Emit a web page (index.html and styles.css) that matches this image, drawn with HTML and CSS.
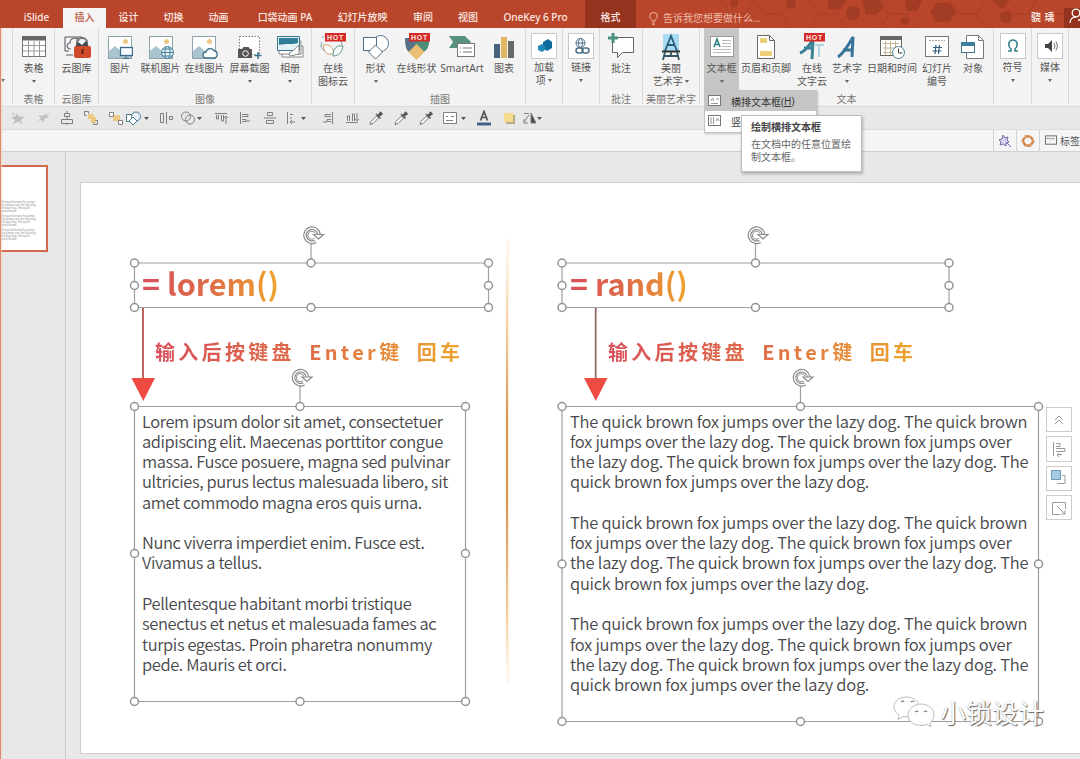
FILE: index.html
```html
<!DOCTYPE html>
<html lang="zh-CN">
<head>
<meta charset="utf-8">
<title>演示文稿</title>
<link rel="stylesheet" href="styles.css">
</head>
<body>
<div class="app">
<header class="tabs">
  <svg class="pattern" width="380" height="28" viewBox="0 0 380 28" fill="none" stroke="#a8402a" stroke-width="1">
    <path d="M20 0l10 14 16 0 8-14M54 0l10 14h18l9 14M82 14l9-14M110 0l9 14-9 14M119 14h18l9-14M137 14l9 14M180 0l9 14h18l9-14M207 14l9 14M189 14l-9 14M250 0l9 14h18l9-14M277 14l9 14M300 0l10 14 18 0 9-14M345 28l9-14h18"/>
    <g fill="#a33c24" stroke="none"><circle cx="34" cy="3" r="4"/><circle cx="153" cy="13" r="7"/><circle cx="91" cy="4" r="5"/><path d="M128 0h18l-6 9h-12zM162 0h16l6 7-8 8h-10zM205 0h17l-5 11h-10zM236 3h14l6 9-6 10h-14l-6-10zM292 0h18l-8 9z"/><circle cx="306" cy="17" r="6"/><circle cx="205" cy="21" r="4"/></g>
  </svg>
  <span class="tab"></span>
  <span class="tab">iSlide</span>
  <span class="tab active">插入</span>
  <span class="tab">设计</span>
  <span class="tab">切换</span>
  <span class="tab">动画</span>
  <span class="tab">口袋动画 PA</span>
  <span class="tab">幻灯片放映</span>
  <span class="tab">审阅</span>
  <span class="tab">视图</span>
  <span class="tab">OneKey 6 Pro</span>
  <span class="tab context">格式</span>
  <span class="tell"><svg width="9" height="13" viewBox="0 0 9 13" fill="none" stroke="#f3b9a6"><path d="M3 9c0-2-2.300-2.500-2.300-5a3.800 3.500 0 0 1 7.600 0c0 2.500-2.300 3-2.300 5zM3 11h3M3.500 12.500h2"/></svg>告诉我您想要做什么...</span>
  <span class="user">骁 瑀</span>
  <span class="share"><svg width="14" height="16" viewBox="0 0 14 16" fill="none" stroke="#fff" stroke-width="1.300"><circle cx="7" cy="5" r="3.800"/><path d="M1 15c0-4 3-6 6-6M9 12h5"/></svg></span>
</header>

<section class="ribbon">
  <div class="group g0"><i class="caret"></i></div>
  <div class="group g1"><div class="items">
    <div class="item"><svg width="26" height="26" viewBox="0 0 26 26"><rect x="1.500" y="2.500" width="23" height="20" fill="#fff" stroke="#777"/><rect x="1" y="2" width="24" height="4.500" fill="#666"/><path d="M2 11.500h22M2 17h22M7.500 7v15M13 7v15M18.500 7v15" stroke="#999" fill="none"/></svg><b>表格</b><i class="caret"></i></div>
  </div><span class="gname">表格</span></div>
  <div class="group g2"><div class="items">
    <div class="item"><svg width="28" height="26" viewBox="0 0 28 26"><path d="M6 17H2V3h17M3 21h7" fill="none" stroke="#555"/><path d="M8 15c-5 0-5-6-1-6 0-6 8-6 9-2" fill="none" stroke="#667" stroke-width="1.200"/><path d="M14 11V8a5 4 0 0 1 10 0v3" fill="none" stroke="#777" stroke-width="2"/><path d="M12 13l3-5 4 3 4-4 3 6z" fill="#3f4b4f"/><rect x="11" y="12" width="17" height="12" rx="2" fill="#cf4a2b"/><path d="M19.500 15v5" stroke="#5a2115" stroke-width="2"/></svg><b>云图库</b></div>
  </div><span class="gname">云图库</span></div>
  <div class="group g3"><div class="items">
    <div class="item"><svg width="26" height="26" viewBox="0 0 26 26"><use href="#pic"/><rect x="13.500" y="13.500" width="12" height="8" fill="#f5fbff" stroke="#3c6e8c" stroke-width="1.300"/><path d="M19 22v2M16 24.500h6" stroke="#3c6e8c"/></svg><b>图片</b></div>
    <div class="item"><svg width="26" height="26" viewBox="0 0 26 26"><use href="#pic"/><g fill="#e8f2f6" stroke="#41809a"><circle cx="19.500" cy="18.500" r="6"/><ellipse cx="19.500" cy="18.500" rx="2.600" ry="6"/><path d="M13.500 18.500h12M15 15h9M15 22h9"/></g></svg><b>联机图片</b></div>
    <div class="item"><svg width="28" height="26" viewBox="0 0 28 26"><use href="#pic"/><path d="M15 24a3 3 0 0 1 0-6 4.500 4.500 0 0 1 8-1.500 4 4 0 0 1 1 7.500z" fill="#fff" stroke="#3f7389" stroke-width="1.300"/></svg><b>在线图片</b></div>
    <div class="item"><svg width="26" height="26" viewBox="0 0 26 26"><rect x="2.500" y="2.500" width="20" height="18" fill="#fff" stroke="#777" stroke-dasharray="1.500 1.500"/><path d="M1 15h4l1.500-2h5l1.500 2h2v9H1z" fill="#555"/><circle cx="8.500" cy="19.500" r="2.800" fill="#555" stroke="#fff"/><path d="M21 18v7M17.500 21.500h7" stroke="#35738a" stroke-width="1.500"/></svg><b>屏幕截图</b><i class="caret"></i></div>
    <div class="item"><svg width="28" height="26" viewBox="0 0 28 26"><path d="M6 12h21v11H6z" fill="#fff" stroke="#888"/><path d="M3 7h22v13H3z" fill="#fff" stroke="#888"/><path d="M1.500 2.500h22v14h-22z" fill="#e4f1f5" stroke="#397791"/><path d="M3 4h19v5c-6 2-12 0-19 2z" fill="#337c99"/><path d="M13 19c4-1 5-4 10-8v9l-9 2z" fill="#fff" stroke="#888"/></svg><b>相册</b><i class="caret"></i></div>
  </div><span class="gname">图像</span></div>
  <div class="group g4"><div class="items">
    <div class="item"><svg width="28" height="28" viewBox="0 0 28 28"><path d="M3 5c1-3 6-3 8 0M3 9c-3 5 1 10 5 8M22 8c3 6-2 9-6 8" fill="none" stroke="#8aa9a9"/><path d="M4 12c6-1 10 2 11 8-6 3-10 0-11-8z" fill="#fff" stroke="#c79f67"/><path d="M24 13c-6-1-10 2-10 10 6 0 9-4 10-10z" fill="#f6fbf9" stroke="#5d9b98"/><use href="#hot" x="6" y="0"/></svg><b>在线<br>图标云</b></div>
  </div></div>
  <div class="group g5"><div class="items">
    <div class="item"><svg width="28" height="26" viewBox="0 0 28 26" fill="#fff" stroke="#54728c"><circle cx="18.500" cy="9.500" r="8"/><rect x="1.500" y="3.500" width="13" height="13"/><path d="M13.500 11l7 7-7 7-7-7z"/></svg><b>形状</b><i class="caret"></i></div>
    <div class="item"><svg width="28" height="28" viewBox="0 0 28 28"><path d="M2 5h10v14H6C3 17 2 12 2 5z" fill="#557288"/><path d="M12 5h14c1 9-3 14-7 14h-7z" fill="#4e8b78"/><path d="M13.500 11l8 8-8 8-8-8z" fill="#e8bf75"/><use href="#hot" x="6" y="0"/></svg><b>在线形状</b></div>
    <div class="item"><svg width="28" height="26" viewBox="0 0 28 26"><path d="M1 2h16l6 6-4 6H1l4-6z" fill="#56927d"/><rect x="9.500" y="9.500" width="17" height="13" fill="#fff" stroke="#777"/><path d="M12 14h1M12 18h1M15 14h9M15 18h9" stroke="#777"/></svg><b class="latin">SmartArt</b></div>
    <div class="item"><svg width="24" height="26" viewBox="0 0 24 26"><path d="M2 10h6v14H2z" fill="#46627c"/><path d="M9 3h6v21H9z" fill="#dfb765"/><path d="M16 7h6v17h-6z" fill="#686868"/></svg><b>图表</b></div>
  </div><span class="gname">插图</span></div>
  <div class="group g6"><div class="items">
    <div class="item boxed"><svg width="26" height="26" viewBox="0 0 26 26"><rect x=".5" y=".5" width="25" height="25" fill="#fff" stroke="#c9c9c9"/><path d="M12 9l5-3 4 3v6l-5 3-4-3z" fill="#0f6a9d"/><path d="M7 13l4-2 3 2v4l-3 2-4-2z" fill="#2488b5"/></svg><b>加载<br>项 <i class="caret in"></i></b></div>
  </div></div>
  <div class="group g7"><div class="items">
    <div class="item boxed"><svg width="26" height="26" viewBox="0 0 26 26" fill="none" stroke="#4e7187"><rect x=".5" y=".5" width="25" height="25" fill="#fff" stroke="#c9c9c9"/><circle cx="12.500" cy="10" r="4.500"/><ellipse cx="12.500" cy="10" rx="2" ry="4.500"/><path d="M8 10h9"/><rect x="8" y="15" width="7" height="5" rx="2.500" fill="#fff" stroke-width="1.500"/><rect x="14" y="15" width="7" height="5" rx="2.500" stroke-width="1.500"/></svg><b>链接</b><i class="caret"></i></div>
  </div></div>
  <div class="group g8"><div class="items">
    <div class="item"><svg width="28" height="28" viewBox="0 0 28 28"><path d="M5.500 4.500h21v15h-11l-5 5v-5h-5z" fill="#fff" stroke="#666"/><path d="M6 0v10M1 5h10" stroke="#4b9180" stroke-width="3"/></svg><b>批注</b></div>
  </div><span class="gname">批注</span></div>
  <div class="group g9"><div class="items">
    <div class="item"><svg width="24" height="28" viewBox="0 0 24 28" fill="none"><path d="M4 1h16v17H4z" fill="#a9dcf2"/><path d="M6 18l6-15 6 15M8 12h8" stroke="#245d7c" stroke-width="1.800"/><path d="M3 18.500h18" stroke="#333" stroke-width="2"/><path d="M6 19l-2 8M18 19l2 8M12 19v5M5 23h14" stroke="#375668" stroke-width="1.800"/></svg><b>美丽<br>艺术字 <i class="caret in"></i></b></div>
  </div><span class="gname">美丽艺术字</span></div>
  <div class="group g10"><div class="items">
    <div class="item pressed"><svg width="26" height="26" viewBox="0 0 26 26"><rect x="1.500" y="2.500" width="23" height="20" fill="#fff" stroke="#999"/><path d="M5 13l3-8 3 8M6 10.500h4" fill="none" stroke="#2f7d80" stroke-width="1.500"/><path d="M13 6.500h9M13 9.500h9M13 12.500h9M4 15.500h18M4 18.500h18" stroke="#bbb"/></svg><b>文本框</b><i class="caret"></i></div>
    <div class="item"><svg width="22" height="26" viewBox="0 0 22 26"><path d="M2.500 1.500h12l5 5v18h-17z" fill="#fff" stroke="#666"/><path d="M14.500 1.500v5h5" fill="none" stroke="#666"/><path d="M5 4h7v5H5zM5 17h12v5H5z" fill="#ebd078"/></svg><b>页眉和页脚</b></div>
    <div class="item"><svg width="28" height="28" viewBox="0 0 28 28"><path d="M2 20c6-2 8-7 13-13l-1 19M6 15h10" fill="none" stroke="#368195" stroke-width="3"/><path d="M17 12h9M21 12v12" stroke="#acd7e2" stroke-width="2"/><use href="#hot" x="6" y="0"/></svg><b>在线<br>文字云</b></div>
    <div class="item"><svg width="24" height="26" viewBox="0 0 24 26"><path d="M3 23c6-4 10-11 15-20l-1 20M8 16h10" fill="none" stroke="#39749a" stroke-width="3"/></svg><b>艺术字</b><i class="caret"></i></div>
    <div class="item"><svg width="26" height="26" viewBox="0 0 26 26"><rect x="1.500" y="2.500" width="21" height="19" fill="#fff" stroke="#666"/><path d="M1 2h22v4H1z" fill="#666"/><path d="M4 9.500h16M4 14h16M4 18.500h16M6.500 7v14M11.500 7v14M16.500 7v14" stroke="#c3b291"/><circle cx="19.500" cy="18.500" r="6" fill="#fff" stroke="#4c8293"/><path d="M19.500 14.500v4.500h4" fill="none" stroke="#444"/></svg><b>日期和时间</b></div>
    <div class="item"><svg width="26" height="26" viewBox="0 0 26 26"><rect x="1.500" y="2.500" width="23" height="20" fill="#fff" stroke="#777"/><path d="M5 6.500h16" stroke="#aaa" stroke-dasharray="2 1"/><path d="M12 11l-1 9M15.500 11l-1 9M9 13.500h9M8.500 17h9" stroke="#345d7c" stroke-width="1.200"/></svg><b>幻灯片<br>编号</b></div>
    <div class="item"><svg width="26" height="26" viewBox="0 0 26 26"><path d="M6.500 1.500h12l5 5v18h-17z" fill="#fff" stroke="#777"/><path d="M18.500 1.500v5h5" fill="none" stroke="#777"/><rect x="1.500" y="8.500" width="13" height="10" fill="#fff" stroke="#44758c"/><path d="M1 8h14v4H1z" fill="#3d8199"/></svg><b>对象</b></div>
  </div><span class="gname">文本</span></div>
  <div class="group g11"><div class="items">
    <div class="item boxed"><svg width="26" height="26" viewBox="0 0 26 26"><rect x=".5" y=".5" width="25" height="25" fill="#fff" stroke="#c9c9c9"/><path d="M8 18h3v-2c-4-4-2-9 2-9s6 5 2 9v2h3" fill="none" stroke="#36818c" stroke-width="1.600"/></svg><b>符号</b><i class="caret"></i></div>
  </div></div>
  <div class="group g12"><div class="items">
    <div class="item boxed"><svg width="26" height="26" viewBox="0 0 26 26"><rect x=".5" y=".5" width="25" height="25" fill="#fff" stroke="#c9c9c9"/><path d="M8 11h3l4-4v12l-4-4H8z" fill="#444"/><path d="M17 10q2 3 0 6M19 8.500q3 4.500 0 9" fill="none" stroke="#777"/></svg><b>媒体</b><i class="caret"></i></div>
  </div></div>
</section>

<nav class="quick">
  <svg viewBox="0 0 16 16"><path d="M7 3l1.500 3.500 6 .5-4 3 2 4-4-2.500L3 14l2-4-4-3 5-.5z" fill="#bdbdbd" stroke="none"/><path d="M2 3l3 2" stroke="#bbb"/></svg>
  <svg viewBox="0 0 16 16"><path d="M14 2l-3 4 2 2-4 0-2 5-1-3-4 1 3-3-3-3 5 1 2-2 1 1z" fill="#c0c0c0" stroke="none"/></svg>
  <svg viewBox="0 0 16 16"><path d="M5.500 3.500h5v3h-5zM2.500 9.500h11v4h-11zM8 1v2M8 6v3M8 13v2"/></svg>
  <svg viewBox="0 0 16 16"><path d="M5 4h6v3h2v6H8V9H5z" fill="#efc883" stroke="none"/><path d="M1.500 5.500v-4h4M10.500 14.500h4v-4M1.500 5.500h2M5.500 1.500v2M12.500 10.500h2M10.500 12.500v2"/></svg>
  <svg viewBox="0 0 16 16"><path d="M5 5h7v6H5z" fill="#efc883" stroke="none"/><path d="M1.500 2.500h4v4h-4zM10.500 10.500h4v4h-4z" fill="#fff"/></svg>
  <svg viewBox="0 0 24 16"><g stroke="#4b7b91"><path d="M.5 4.500h7v7h-7z" fill="#fff"/><circle cx="10" cy="6.500" r="4.500" fill="#e7f0f4"/><path d="M7 7l4 4-4 4-4-4z" fill="#fff"/></g><path class="c" d="M18 7h5l-2.500 3z"/></svg>
  <svg viewBox="0 0 16 16"><path d="M1.500 3.500h3v9h-3zM7.500 2v12M10.500 6.500h3v3h-3z"/></svg>
  <svg viewBox="0 0 24 16"><circle cx="6" cy="6.500" r="4.500"/><circle cx="10" cy="9.500" r="4.500"/><path class="c" d="M17 7h5l-2.500 3z"/></svg>
  <svg viewBox="0 0 16 16"><path d="M2 3.500h12M3.500 5v4h2V5M8.500 5v6h2V5M13 14V6M11 8l2-2 2 2"/></svg>
  <svg viewBox="0 0 16 16"><path d="M3.500 2v12M5 4.500h6v2H5M5 9.500h4v2H5M13 11H9"/></svg>
  <svg viewBox="0 0 16 16"><path d="M5.500 2.500h5v3h-5zM2 8h12M4.500 10.500h7v3h-7z"/></svg>
  <svg viewBox="0 0 24 16"><path d="M3.500 2v12M6 4.500h3M6 8h2M6 12h5M8 10l-2 2 2 2"/><path class="c" d="M17 7h5l-2.500 3z"/></svg>
  <svg viewBox="0 0 16 16"><path d="M12.500 2v12M11 4.500H5v2h6M11 9.500H7v2h4M3 12h4"/></svg>
  <svg viewBox="0 0 16 16"><path d="M2 12.500h12M3.500 11V6h2v5M8.500 11V4h2v7M13 3v8M11 9l2 2 2-2"/></svg>
  <svg viewBox="0 0 16 16"><use href="#drop"/></svg>
  <svg viewBox="0 0 16 16"><use href="#drop"/></svg>
  <svg viewBox="0 0 16 16"><use href="#drop"/></svg>
  <svg viewBox="0 0 24 16"><path d="M1.500 2.500h13v11h-13zM4 6.500h2M4 10.500h7M9 6.500h3" fill="#fff"/><path class="c" d="M19 7h5l-2.500 3z"/></svg>
  <svg viewBox="0 0 16 16"><path d="M4.500 10.500l3.500-9 3.500 9M5.500 7.500h5" stroke="#555" stroke-width="1.700"/><path d="M1 12.500h14v3H1z" fill="#3f6487" stroke="none"/></svg>
  <svg viewBox="0 0 16 16"><path d="M5 5h9v9H5z" fill="#b6ad80" stroke="none"/><path d="M3 3h9v9H3z" fill="#f3dc8d" stroke="none"/></svg>
  <svg viewBox="0 0 24 16"><path d="M1 3.500h5M1 12l5-7M1 9v4h4"/><path d="M8 13V3l5 10z" fill="#444"/><path class="c" d="M14 7h5l-2.500 3z"/></svg>
</nav>

<div class="bar">
  <span class="cell"><svg width="14" height="14" viewBox="0 0 14 14" fill="#d8d3ee" stroke="#7868a8"><path d="M5 1l2 3 3-1-1 3 2 2-3 1v3L5 10l-3 1 1-3-2-2 3-1zM9 9l4 4"/></svg></span>
  <span class="cell"><svg width="14" height="14" viewBox="0 0 14 14" fill="none" stroke="#d58545"><path d="M4.500 2.500h5l3 4.500-3 4.500h-5L1.500 7z" stroke-width="2.400" stroke-dasharray="4.500 .7"/></svg></span>
  <span class="cell last"><svg width="13" height="11" viewBox="0 0 13 11" fill="none" stroke="#666"><rect x=".5" y=".5" width="12" height="9"/><path d="M2 3.500h9" stroke-dasharray="2 1"/></svg>标签</span>
</div>

<main class="work">
  <aside class="thumbs"><div class="thumb">
    <p>The quick brown fox jumps<br>fox jumps over the lazy dog<br>the lazy dog. The quick<br>quick brown</p>
    <p>The quick brown fox jumps<br>fox jumps over the lazy dog<br>the lazy dog. The quick<br>quick brown</p>
    <p>The quick brown fox jumps<br>fox jumps over the lazy dog<br>the lazy dog. The quick<br>quick brown</p>
  </div></aside>
  <section class="slide">
    <svg class="marks" width="1000" height="571" viewBox="80 182 1000 571">
      <g fill="none" stroke="#a09fa3" stroke-width="1.200">
        <path d="M134.500 263h354v44.500h-354zM562 263h387v44.500H562zM134.500 406.500h331V701.500h-331zM562 406.500h476.500V721.500H562zM311 243v16M755.500 243v16M300 386v16M800.500 386v16"/>
      </g>
      <path d="M143 308v72" stroke="#b9544b" stroke-width="1.800"/><path d="M595.700 308v72" stroke="#8f6c68" stroke-width="1.800"/>
      <path d="M131.500 378h23.500l-11.700 23zM584 378h23.500l-11.700 23z" fill="#ee4c43"/>
      <g>
        <use href="#h" x="134.500" y="263"/><use href="#h" x="311" y="263"/><use href="#h" x="488.500" y="263"/><use href="#h" x="134.500" y="285.500"/><use href="#h" x="488.500" y="285.500"/><use href="#h" x="134.500" y="307.500"/><use href="#h" x="311" y="307.500"/><use href="#h" x="488.500" y="307.500"/>
        <use href="#h" x="562" y="263"/><use href="#h" x="755.500" y="263"/><use href="#h" x="949" y="263"/><use href="#h" x="562" y="285.500"/><use href="#h" x="949" y="285.500"/><use href="#h" x="562" y="307.500"/><use href="#h" x="755.500" y="307.500"/><use href="#h" x="949" y="307.500"/>
        <use href="#h" x="134.500" y="406.500"/><use href="#h" x="300" y="406.500"/><use href="#h" x="465.500" y="406.500"/><use href="#h" x="134.500" y="553.500"/><use href="#h" x="465.500" y="553.500"/><use href="#h" x="134.500" y="701.500"/><use href="#h" x="300" y="701.500"/><use href="#h" x="465.500" y="701.500"/>
        <use href="#h" x="562" y="406.500"/><use href="#h" x="800.500" y="406.500"/><use href="#h" x="1038.500" y="406.500"/><use href="#h" x="562" y="564"/><use href="#h" x="1038.500" y="564"/><use href="#h" x="562" y="721.500"/><use href="#h" x="800.500" y="721.500"/><use href="#h" x="1038.500" y="721.500"/>
        <use href="#rot" x="312" y="235"/><use href="#rot" x="756.500" y="235"/><use href="#rot" x="300.500" y="377.500"/><use href="#rot" x="801.500" y="377.500"/>
      </g>
    </svg>
    <i class="divider"></i>
    <h1 class="title left">= lorem()</h1>
    <h1 class="title right">= rand()</h1>
    <h2 class="hint left">输入后按键盘 <em>Enter键</em> 回车</h2>
    <h2 class="hint right">输入后按键盘 <em>Enter键</em> 回车</h2>
    <div class="body left">Lorem ipsum dolor sit amet, consectetuer
adipiscing elit. Maecenas porttitor congue
massa. Fusce posuere, magna sed pulvinar
ultricies, purus lectus malesuada libero, sit
amet commodo magna eros quis urna.

Nunc viverra imperdiet enim. Fusce est.
Vivamus a tellus.

Pellentesque habitant morbi tristique
senectus et netus et malesuada fames ac
turpis egestas. Proin pharetra nonummy
pede. Mauris et orci.</div>
    <div class="body right">The quick brown fox jumps over the lazy dog. The quick brown
fox jumps over the lazy dog. The quick brown fox jumps over
the lazy dog. The quick brown fox jumps over the lazy dog. The
quick brown fox jumps over the lazy dog.

The quick brown fox jumps over the lazy dog. The quick brown
fox jumps over the lazy dog. The quick brown fox jumps over
the lazy dog. The quick brown fox jumps over the lazy dog. The
quick brown fox jumps over the lazy dog.

The quick brown fox jumps over the lazy dog. The quick brown
fox jumps over the lazy dog. The quick brown fox jumps over
the lazy dog. The quick brown fox jumps over the lazy dog. The
quick brown fox jumps over the lazy dog.</div>
    <div class="side">
      <span><svg viewBox="0 0 16 16"><path d="M4 8l4-4 4 4M4 12l4-4 4 4"/></svg></span>
      <span><svg viewBox="0 0 16 16"><path d="M2.500 1v14M5 2.500h4v3H5M5 7.500h9v3H5M11 13.500H6M8 12l-2 2 2 2"/></svg></span>
      <span><svg viewBox="0 0 16 16"><path d="M6 13.500h8v-8h-3" /><path d="M.5 .5h9v9h-9z" fill="#a9cbe0" stroke="#6d9cba"/></svg></span>
      <span><svg viewBox="0 0 16 16"><path d="M14.500 9V2.500h-13v12H9M6 6l8 8M14 10v4h-4"/></svg></span>
    </div>
    <div class="mark">
      <svg width="44" height="36" viewBox="0 0 44 36" fill="#fff" stroke="#b5b5b5" stroke-width=".9"><path d="M17 23l-6-.5-5 3 1-4.500C-3 14 3 3 14 3c8 0 12 4 13 9"/><path d="M29 10c7 0 13 4.500 13 11 0 4-2 6-4 8l1 4-4-2.500C24 34 16 28 16 21c0-6 6-11 13-11z"/><path d="M9 8q2-2 3 0M19 8q2-2 3 0M23 18q2-2 3 0M32 18q2-2 3 0" fill="none" stroke="#777" stroke-width="1.200"/></svg>
      <span>小锁设计</span>
    </div>
  </section>
</main>

<div class="menu">
  <div class="row hover"><svg width="14" height="12" viewBox="0 0 14 12" fill="#fff" stroke="#777"><rect x=".5" y=".5" width="12" height="10"/><path d="M3 6l1.500-3L6 6M8 4h3M3 8.500h7" stroke="#999"/></svg>横排文本框(<u>H</u>)</div>
  <div class="row"><svg width="14" height="12" viewBox="0 0 14 12" fill="#fff" stroke="#777"><rect x=".5" y=".5" width="12" height="10"/><path d="M8 6l1.500-3L11 6M3 2v7M5.500 2v7" stroke="#999"/></svg>竖</div>
</div>
<div class="tip"><strong>绘制横排文本框</strong><span>在文档中的任意位置绘<br>制文本框。</span></div>
<i class="edge"></i>

<svg class="defs" width="0" height="0">
  <defs>
    <g id="pic"><rect x="1.500" y="2.500" width="23" height="22" fill="#fff" stroke="#8fa3ad"/><path d="M2 24V17l6-5 6 5 4-3 6 6v4z" fill="#a9c3cf"/><circle cx="18.500" cy="7.500" r="2.500" fill="#ecca86"/></g>
    <g id="hot"><rect width="21" height="8.500" fill="#d42a2a"/><text x="10.500" y="7" text-anchor="middle" class="hottext">HOT</text></g>
    <g id="drop"><path d="M2 14.500l1-3 5.500-5.500 2 2L5 13.500z" fill="#fff" stroke="#777"/><path d="M8 4l4.500 4.500M10 6l2.500-3.500 1.500 1.500L10.500 6.500z" stroke="#555" fill="#555" stroke-width="1.500"/></g>
    <circle id="h" r="4" fill="#fff" stroke="#939296" stroke-width="1.500"/>
    <g id="rot" fill="none"><path d="M3.500 6.300A7 7 0 1 1 7-.5" stroke="#8b8a8e" stroke-width="3.800"/><path d="M3.500 6.300A7 7 0 1 1 7-.5" stroke="#fff" stroke-width="1.400"/><path d="M2.500 3.200A4 4 0 1 1 3.500-1.500" stroke="#8b8a8e"/><path d="M1.500-.5h10l-5 4.500z" fill="#fff" stroke="#8b8a8e" stroke-width="1.200"/></g>
  </defs>
</svg>
</div>
</body>
</html>
```
FILE: styles.css
```css
* { box-sizing: border-box; }
body { margin: 0; font-family: "Noto Sans", "Noto Sans CJK SC", sans-serif; font-size: 10px; color: #565656; }
i, em { font-style: normal; }
.app { position: relative; width: 1080px; height: 759px; overflow: hidden; display: flex; flex-direction: column; background: #e8e8e8; }

.tabs { position: relative; height: 28px; flex: none; background: #b9452a; display: grid; grid-template-columns: 10px 53px 43px 45px 45px 45px 88px 67px 54px 36px 99px 51px 380px 38px 26px; padding-top: 8px; color: #fbe9e3; line-height: 18px; }
.pattern { position: absolute; right: 0; top: 0; }
.tab { text-align: center; white-space: nowrap; position: relative; font-weight: 500; }
.tab.active { background: #f6f4f4; color: #bb5a42; }
.tab.context { background: #94341f; margin-top: -8px; padding-top: 8px; }
.tell { position: relative; display: flex; align-items: center; gap: 5px; padding-left: 13px; color: #f0bcaa; white-space: nowrap; }
.user { position: relative; padding-left: 15px; white-space: nowrap; font-weight: 600; word-spacing: 1px; }
.share { position: relative; background: #94341f; overflow: hidden; margin-left: 10px; padding-left: 5px; }

.ribbon { height: 79px; flex: none; display: flex; background: #f4f3f3; border-bottom: 1px solid #dadada; }
.group { position: relative; display: flex; flex-direction: column; flex: none; height: 76px; border-right: 1px solid #d9d9d9; }
.g0 { width: 13px; padding: 46px 0 0 1px; } .g1 { width: 42px; } .g2 { width: 44px; } .g3 { width: 213px; } .g4 { width: 43px; } .g5 { width: 171px; }
.g6, .g7 { width: 37px; } .g8 { width: 43px; } .g9 { width: 57px; } .g10 { width: 294px; padding-left: 4px; } .g11 { width: 38px; } .g12 { width: 37px; }
.items { display: grid; grid-template-columns: 100%; height: 62px; }
.g3 .items { grid-template-columns: 42px 39px 49px 41px 40px; }
.g5 .items { grid-template-columns: 41px 41px 50px 34px; }
.g10 .items { grid-template-columns: 35px 54px 38px 32px 58px 32px 40px; }
.item { display: flex; flex-direction: column; align-items: center; padding-top: 5px; height: 62px; }
.item svg { flex: none; height: 28px; }
.item.boxed { padding-top: 4px; }
.item b { font-weight: 400; white-space: nowrap; text-align: center; line-height: 13px; margin-top: 1px; }
.item b.latin { font-size: 10.300px; }
.pressed { background: #c6c6c6; padding-top: 5px; }
.caret { display: block; width: 0; height: 0; border: 2px solid transparent; border-top: 3px solid #666; border-bottom: 0; margin-top: 5px; }
.caret.in { display: inline-block; vertical-align: 2px; margin: 0; }
.gname { position: absolute; left: 0; right: 0; top: 65px; text-align: center; line-height: 13px; color: #757575; white-space: nowrap; }
.hottext { font: bold 7px "Liberation Sans", sans-serif; fill: #ffe9dd; letter-spacing: .8px; }

.quick { height: 23px; flex: none; background: #e9e8e9; border-bottom: 1px solid #dcdcdc; display: grid; align-items: center; padding-left: 10px; grid-template-columns: 26px 23px 24px 25px 18px 33px 21px 33px 24px 25px 22px 36px 24px 24px 25px 25px 24px 34px 25px 22px 30px; }
.quick svg { height: 16px; width: 16px; fill: none; stroke: #808080; }
.quick svg[viewBox="0 0 24 16"] { width: 24px; overflow: visible; }
.quick .c { fill: #555; stroke: none; }

.bar { height: 22px; flex: none; background: #f5f5f6; border-bottom: 1px solid #cfcfd2; display: flex; justify-content: flex-end; }
.cell { width: 23px; border-left: 1px solid #d3d3d3; display: flex; align-items: center; justify-content: center; overflow: hidden; }
.cell.last { width: 41px; gap: 3px; justify-content: flex-start; padding-left: 5px; white-space: nowrap; }

.work { flex: 1; display: flex; min-height: 0; }
.thumbs { width: 66px; flex: none; border-right: 1px solid #c9c9cb; padding-top: 13px; background: #e8e7e7; }
.thumb { width: 48px; height: 87px; background: #fff; border: 2px solid #d4684c; border-left: 0; padding: 34px 0 0 1px; }
.thumb p { margin: 0 0 2px; height: 12px; font-size: 2.700px; line-height: 3px; color: #888; white-space: nowrap; }
.slide { position: relative; flex: none; width: 1014px; height: 572px; margin: 30px 0 0 14px; background: #fff; border: 1px solid #cfcfd1; border-right: 0; }
.marks { position: absolute; left: -1px; top: -1px; }
.divider { position: absolute; left: 425px; top: 55px; width: 2px; height: 445px; background: linear-gradient(#fff, #f3cfa4 20%, #dd9455 40%, #dd9455 60%, #f3cfa4 85%, #fff); box-shadow: 1px 0 1px rgba(255, 225, 170, .5); }
.title, .hint { position: absolute; margin: 0; white-space: nowrap; font-family: "Noto Sans CJK SC", sans-serif; background: linear-gradient(90deg, #d9505a, #df6d47 50%, #eea52c); -webkit-background-clip: text; background-clip: text; color: transparent; }
.title { font-size: 30.600px; font-weight: 700; line-height: 40px; top: 80px; }
.title.left { left: 61px; } .title.right { left: 489px; }
.hint { font-size: 20px; font-weight: 700; line-height: 30px; top: 154px; letter-spacing: 3.300px; word-spacing: 6.500px; }
.hint.left { left: 74px; } .hint.right { left: 527px; }
.body { position: absolute; top: 227.500px; white-space: pre; font: 350 16.500px/20.280px "Noto Sans CJK SC", sans-serif; color: #48484b; }
.body.left { left: 61px; letter-spacing: -.4px; } .body.right { left: 489px; letter-spacing: -.25px; }
.side { position: absolute; left: 965px; top: 224px; display: grid; gap: 4px; }
.side span { width: 26px; height: 25.300px; border: 1px solid #ccc; background: #fff; display: grid; place-items: center; }
.side svg { width: 16px; height: 16px; fill: none; stroke: #999; }
.mark { position: absolute; left: 811px; top: 511px; display: flex; align-items: center; gap: 4px; }
.mark span { font: 400 26px/36px "Noto Sans CJK SC", sans-serif; color: #fff; text-shadow: 1px 1px 1px #666, 0 0 1px #999; }

.menu { position: absolute; left: 704px; top: 90px; width: 113px; height: 43px; background: #fdfdfd; border: 1px solid #c4c4c4; box-shadow: 1px 1px 2px rgba(0,0,0,.2); }
.row { height: 20px; display: flex; align-items: center; padding-left: 3px; color: #444; white-space: nowrap; }
.row svg { margin-right: 9px; flex: none; }
.row.hover { background: #c6c5c6; color: #333; }
.tip { position: absolute; left: 741px; top: 115px; width: 121px; height: 57px; background: #fff; border: 1px solid #bdbdbd; box-shadow: 1px 2px 3px rgba(0,0,0,.25); padding: 4px 0 0 9px; display: flex; flex-direction: column; gap: 3px; line-height: 13px; color: #666; white-space: nowrap; }
.tip strong { line-height: 15px; color: #444; font-weight: 600; }
.edge { position: absolute; left: 0; top: 28px; bottom: 0; width: 1px; background: #dc8a6c; box-shadow: 1px 0 2px #f8cdb8; }
.defs { position: absolute; }
```
